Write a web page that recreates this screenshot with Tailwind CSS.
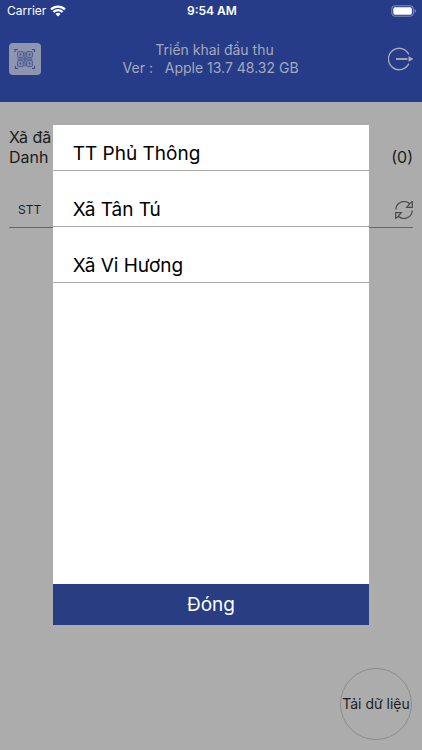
<!DOCTYPE html>
<html lang="vi">
<head>
<meta charset="utf-8">
<meta name="viewport" content="width=device-width, initial-scale=1">
<title>Triển khai đầu thu</title>
<script src="https://cdn.jsdelivr.net/npm/@tailwindcss/browser@4"></script>
</head>
<body class="min-h-screen flex flex-col bg-[#acacac] font-['Inter','Noto_Sans',sans-serif] text-[#1c1c1c]">
<header class="bg-[#263c89] pb-[25px]">
  <div class="grid grid-cols-3 items-center h-[22px] pl-[7px] pr-[5px] text-white text-xs">
    <div class="flex items-center gap-1">
      <span>Carrier</span>
      <svg class="w-4 h-3" viewBox="0 0 16 12" fill="none" stroke="currentColor" stroke-width="2.2" aria-hidden="true">
        <path d="M1 4.4a10 10 0 0 1 14 0M3.4 7a6.6 6.6 0 0 1 9.2 0"/>
        <path d="M8 11.6 5.5 9a3.6 3.6 0 0 1 5 0z" fill="currentColor" stroke="none"/>
      </svg>
    </div>
    <span class="text-center font-semibold">9:54 AM</span>
    <svg class="justify-self-end w-[26px] h-3" viewBox="0 0 26 12" aria-hidden="true">
      <rect x=".8" y=".8" width="21.6" height="10.4" rx="3" fill="none" stroke="#8792bd"/>
      <rect x="2.3" y="2.3" width="18.6" height="7.4" rx="1.6" fill="#fff"/>
      <path d="M23.7 4v4a2.2 2.2 0 0 0 0-4z" fill="#8792bd"/>
    </svg>
  </div>
  <div class="flex items-center justify-between pl-[9px] pr-2 pt-[19px]">
    <button type="button" aria-label="Quét mã QR" class="w-8 h-9 flex items-center justify-center">
      <svg class="size-8" viewBox="-6 -6 32 32" fill="none" stroke="#3a4c8c" stroke-width=".9">
        <rect x="-6" y="-6" width="32" height="32" rx="4" fill="#8e95ae" stroke="none"/>
        <path d="M0 3V.5h3M17 .5h2.5V3M19.500 17v2.500H17M3 19.500H.5V17" stroke-width="1.1"/>
        <rect x="2.7" y="2.7" width="5.6" height="5.6" rx=".6"/><rect x="11.7" y="2.7" width="5.6" height="5.6" rx=".6"/>
        <rect x="2.7" y="11.7" width="5.6" height="5.6" rx=".6"/><rect x="11.7" y="11.7" width="5.6" height="5.6" rx=".6"/>
        <path d="M4.6 5.5h1.8M13.6 5.5h1.8M4.6 14.5h1.8M13.6 14.5h1.8" stroke-width="1.8"/>
        <path d="M10 2.5v6M10 11.5v6M2.5 10h6M11.5 10h6M9 9h2v2H9z"/>
      </svg>
    </button>
    <h1 class="text-center text-sm leading-[18px] text-[#a5a9b8]">Triển khai đầu thu<br>Ver :&nbsp;&nbsp; Apple 13.7 48.32 GB&nbsp;&nbsp;</h1>
    <button type="button" aria-label="Đăng xuất" class="w-[26px] h-6 text-[#acafba]">
      <svg class="w-[26px] h-6" viewBox="0 0 26 24" fill="none" stroke="currentColor" stroke-width="1.3">
        <path d="M20.800 7.400A10.700 10.700 0 1 0 20.800 16.600"/>
        <path d="M8 12h11.500" stroke-width="1.8"/>
        <path d="M20.500 9.200 25.500 12 20.500 14.800z" fill="currentColor" stroke="none"/>
      </svg>
    </button>
  </div>
</header>
<main class="grow flex flex-col px-[9px] pt-[25px] pb-[10px]">
  <div class="text-base leading-5">
    <p>Xã đã</p>
    <p class="flex justify-between"><span>Danh s</span><span>(0)</span></p>
  </div>
  <div class="mt-[26px] h-[35px] flex items-center justify-between pl-[9px] border-b border-[#5265a8]">
    <span class="text-xs">STT</span>
    <button type="button" aria-label="Tải lại" class="w-[18px] h-[18px] text-[#484848]">
      <svg class="size-[18px]" viewBox="0 0 18 18" fill="none" stroke="currentColor" stroke-width="1.2">
        <path d="M.8 8.600A8.200 8.200 0 0 1 14.600 2.800L17.300.6V6.300H11.800L14.600 2.800"/>
        <path d="M17.200 9.400A8.200 8.200 0 0 1 3.400 15.200L.7 17.400V11.700H6.200L3.400 15.200"/>
      </svg>
    </button>
  </div>
  <button type="button" class="mt-auto mr-px self-end size-[72px] rounded-full border border-[#8c8c8c] text-sm whitespace-nowrap flex items-center justify-center">Tải dữ liệu</button>
</main>
<div class="fixed inset-0 flex items-center justify-center">
  <section role="dialog" aria-modal="true" aria-label="Chọn xã" class="w-3/4 h-2/3 flex flex-col bg-white text-black">
    <ul class="grow text-[19px] leading-6">
      <li class="border-b border-[#a9a9ae]"><button type="button" class="w-full text-left px-5 pt-[17px] pb-1">TT Phủ Thông</button></li>
      <li class="border-b border-[#a9a9ae]"><button type="button" class="w-full text-left px-5 pt-[27px] pb-1">Xã Tân Tú</button></li>
      <li class="border-b border-[#a9a9ae]"><button type="button" class="w-full text-left px-5 pt-[27px] pb-1">Xã Vi Hương</button></li>
    </ul>
    <button type="button" class="h-[41px] pt-0.5 shrink-0 bg-[#283d82] text-white text-[19px]">Đóng</button>
  </section>
</div>
</body>
</html>
